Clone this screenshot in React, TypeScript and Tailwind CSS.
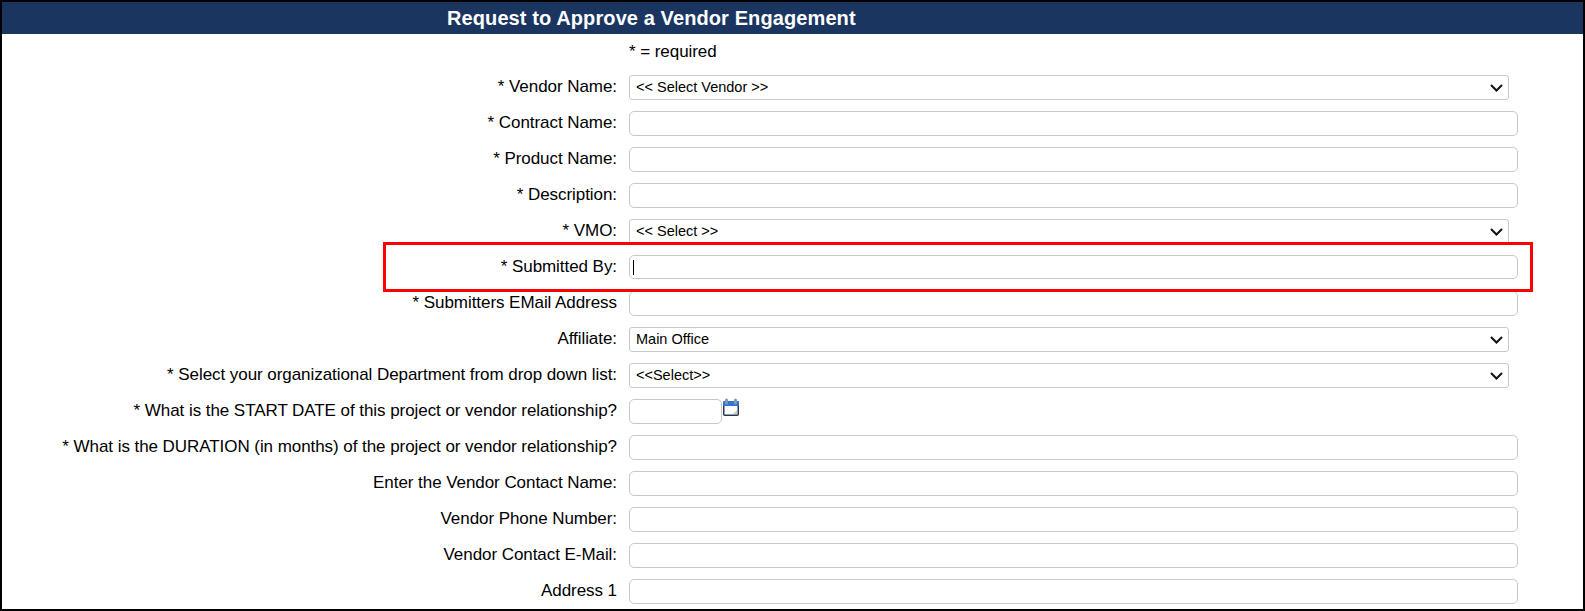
const inputClass = 'h-[25px] w-[889px] rounded-[5px] border border-[#c8c8c8] bg-white px-2 text-sm text-black outline-none'
const selectClass = 'h-[25px] w-[880px] appearance-none rounded-[3px] border border-[#c8c8c8] bg-white pl-[6px] pt-[1px] text-[14.5px] text-black outline-none'

type Campo = {
  label: string
  tipo?: 'texto' | 'select' | 'fecha' | 'cursor'
  opcion?: string
}

const campos: Campo[] = [
  { label: '* Vendor Name:', tipo: 'select', opcion: '<< Select Vendor >>' },
  { label: '* Contract Name:' },
  { label: '* Product Name:' },
  { label: '* Description:' },
  { label: '* VMO:', tipo: 'select', opcion: '<< Select >>' },
  { label: '* Submitted By:', tipo: 'cursor' },
  { label: '* Submitters EMail Address' },
  { label: 'Affiliate:', tipo: 'select', opcion: 'Main Office' },
  { label: '* Select your organizational Department from drop down list:', tipo: 'select', opcion: '<<Select>>' },
  { label: '* What is the START DATE of this project or vendor relationship?', tipo: 'fecha' },
  { label: '* What is the DURATION (in months) of the project or vendor relationship?' },
  { label: 'Enter the Vendor Contact Name:' },
  { label: 'Vendor Phone Number:' },
  { label: 'Vendor Contact E-Mail:' },
  { label: 'Address 1' },
]

function Calendario() {
  return (
    <svg width="16" height="18" viewBox="0 0 16 18" className="ml-[1px] mt-[-1px] self-start">
      <rect x="0.75" y="3.75" width="14.5" height="13.5" rx="1" fill="#ffffff" stroke="#27384d" strokeWidth="1.5" />
      <rect x="0" y="3" width="16" height="5" rx="1" fill="#2f74d8" />
      <rect x="2" y="0.5" width="3" height="6" rx="1.5" fill="#8a97a6" />
      <rect x="11" y="0.5" width="3" height="6" rx="1.5" fill="#8a97a6" />
      <path d="M10 16 L14 16 L14 12 Z" fill="#c9ced4" />
    </svg>
  )
}

function Control({ campo }: { campo: Campo }) {
  if (campo.tipo === 'select') {
    return (
      <div className="relative">
        <select className={selectClass} defaultValue={campo.opcion}>
          <option>{campo.opcion}</option>
        </select>
        <svg width="13" height="8" viewBox="0 0 13 8" className="pointer-events-none absolute right-[6px] top-[9px]">
          <path d="M1 1 L6.5 6.5 L12 1" fill="none" stroke="#111111" strokeWidth="2" />
        </svg>
      </div>
    )
  }
  if (campo.tipo === 'fecha') {
    return (
      <div className="flex items-center">
        <input type="text" className="h-[25px] w-[93px] rounded-[5px] border border-[#c8c8c8] bg-white px-2 text-sm outline-none" />
        <Calendario />
      </div>
    )
  }
  if (campo.tipo === 'cursor') {
    return (
      <div className="relative">
        <input type="text" className={inputClass + ' !h-[24px]'} />
        <span className="absolute left-[4px] top-[5px] h-[15px] w-px bg-black" />
      </div>
    )
  }
  return <input type="text" className={inputClass} />
}

export default function App() {
  return (
    <div className="relative h-[611px] w-[1585px] overflow-hidden border-2 border-black bg-white font-['Liberation_Sans',Arial,sans-serif] text-black">
      <div className="flex h-[32px] items-center bg-[#1a355f] pl-[445px] text-[20px] font-bold tracking-[0.1px] text-white">
        Request to Approve a Vendor Engagement
      </div>

      <div className="flex h-[35px] items-center pl-[627px] text-[17px] tracking-[-0.06px]">* = required</div>

      <form>
        {campos.map((campo) => (
          <div key={campo.label} className="flex h-9 items-center gap-3">
            <label className="w-[615px] text-right text-[17px] tracking-[-0.06px]">{campo.label}</label>
            <Control campo={campo} />
          </div>
        ))}
      </form>

      {/* recuadro rojo de la captura */}
      <div className="absolute left-[381px] top-[240px] h-[50px] w-[1150px] border-[3px] border-[#ff0000]" />
    </div>
  )
}
